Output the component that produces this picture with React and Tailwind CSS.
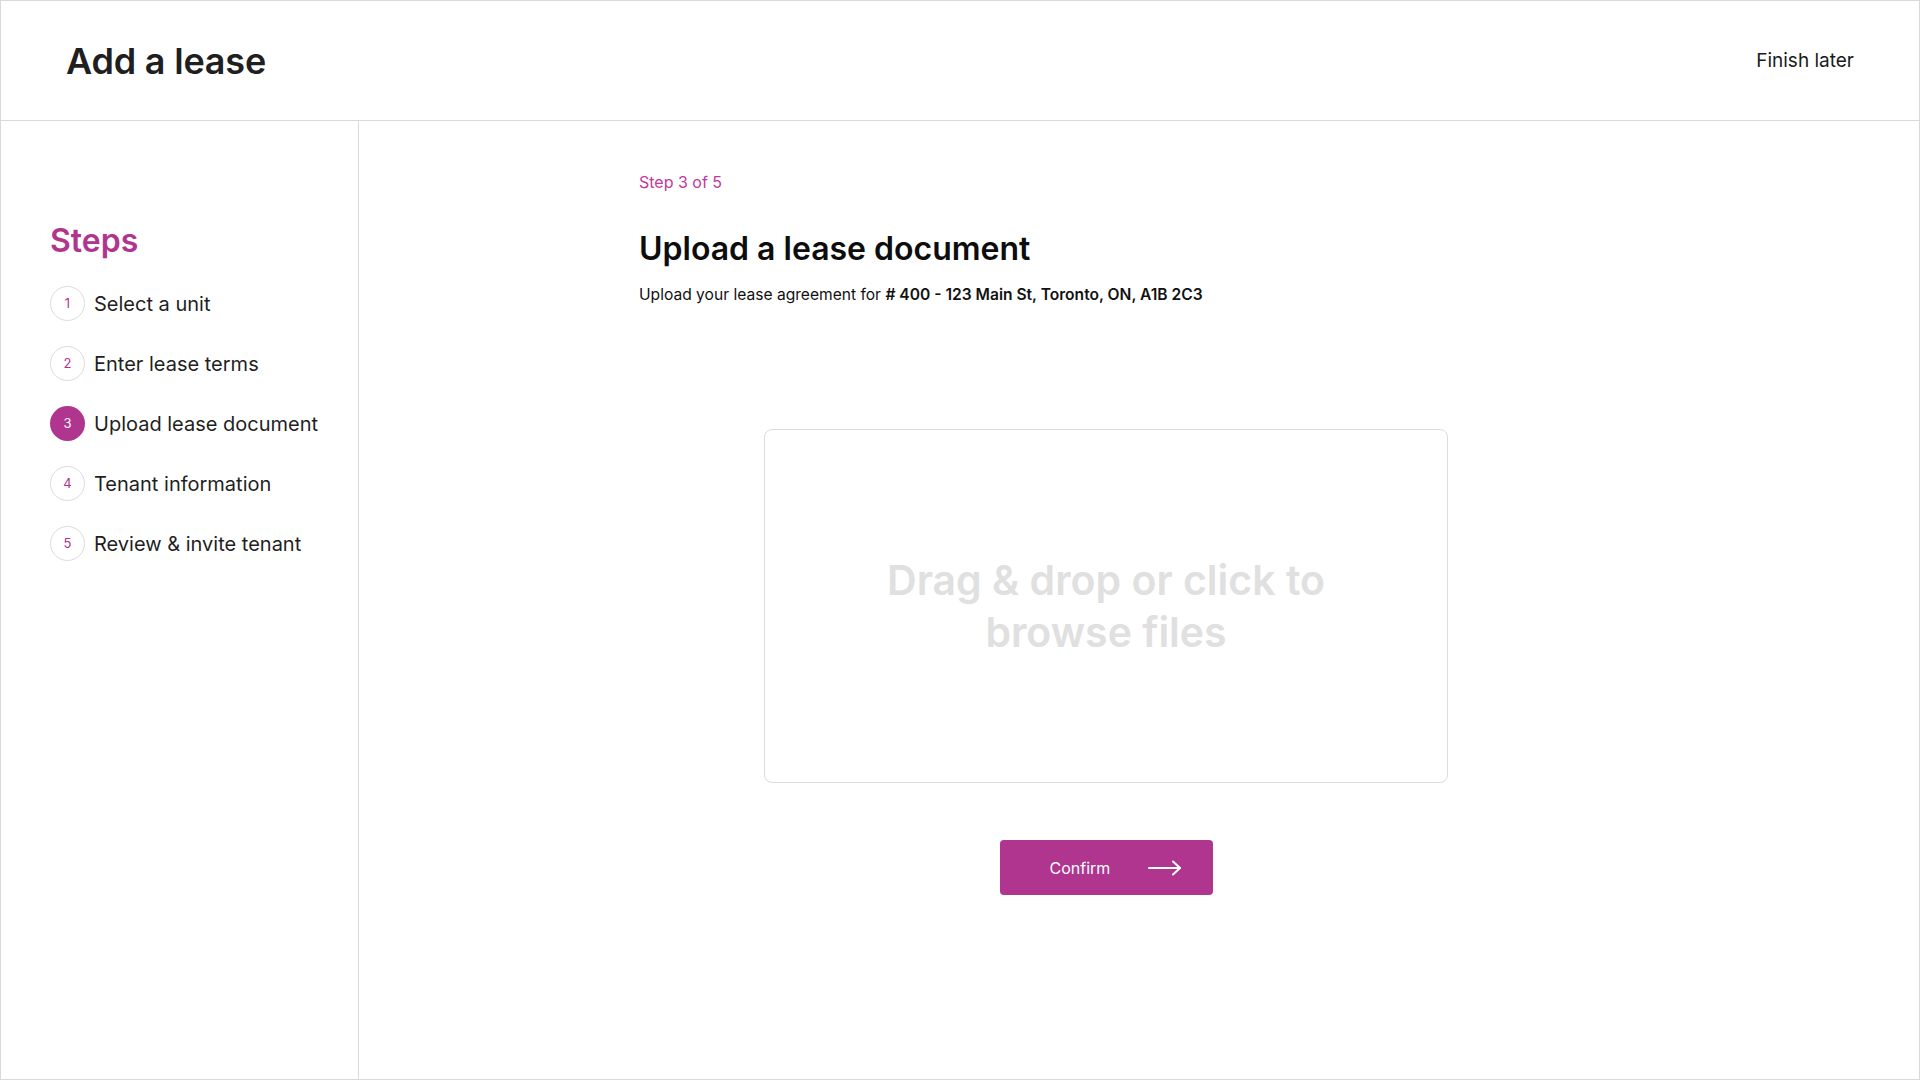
import React from 'react';

const steps = [
  { n: 1, label: 'Select a unit' },
  { n: 2, label: 'Enter lease terms' },
  { n: 3, label: 'Upload lease document' },
  { n: 4, label: 'Tenant information' },
  { n: 5, label: 'Review & invite tenant' },
];

export default function App() {
  const current = 3;

  return (
    <div
      className="flex h-[1080px] w-[1920px] flex-col border border-[#d9d9d9] bg-white text-[#1c1c1c]"
      style={{ fontFamily: 'Inter, "Noto Sans", sans-serif' }}
    >
      {/* Header */}
      <header className="flex h-[120px] shrink-0 items-center justify-between border-b border-[#d9d9d9] pl-[65px] pr-[65px]">
        <h1 className="text-[36px] font-semibold leading-none tracking-[-0.2px] text-[#1f1f1f]">Add a lease</h1>
        <button className="text-[19px] leading-none text-[#1a1a1a]">Finish later</button>
      </header>

      <div className="flex flex-1">
        {/* Sidebar */}
        <aside className="w-[358px] shrink-0 border-r border-[#d9d9d9] pl-[49px] pt-[100px]">
          <h2 className="text-[32px] font-semibold leading-[40px] text-[#b0358f]">Steps</h2>
          <ul className="mt-[25px] flex flex-col gap-[25px]">
            {steps.map((s) => (
              <li key={s.n} className="flex items-center gap-[9px]">
                <span
                  className={
                    s.n === current
                      ? 'flex h-[35px] w-[35px] items-center justify-center rounded-full bg-[#b0358f] text-[13px] text-white'
                      : 'flex h-[35px] w-[35px] items-center justify-center rounded-full border border-[#dcdcdc] text-[13px] text-[#b0358f]'
                  }
                >
                  {s.n}
                </span>
                <span className="text-[20px] leading-none text-[#1f1f1f]">{s.label}</span>
              </li>
            ))}
          </ul>
        </aside>

        {/* Main */}
        <main className="flex-1 pl-[280px] pt-[51px]">
          <div className="flex w-[934px] flex-col">
            <p className="text-[16px] leading-[20px] text-[#c0399b]">Step 3 of 5</p>
            <h3 className="mt-[38px] text-[32px] font-semibold leading-[38px] text-[#0d0d0d]">Upload a lease document</h3>
            <p className="mt-[17px] text-[15.6px] leading-[20px] text-[#111]">
              Upload your lease agreement for{' '}
              <span className="font-semibold">#&nbsp;400 - 123 Main St, Toronto, ON, A1B 2C3</span>
            </p>

            <div className="mt-[124px] flex h-[354px] w-[684px] cursor-pointer items-center justify-center self-center rounded-[8px] border border-[#dcdcdc]">
              <p className="w-[450px] text-center text-[41px] font-semibold leading-[52px] text-[#e0e0e0]">
                Drag &amp; drop or click to browse files
              </p>
            </div>

            <button className="mt-[57px] flex h-[55px] w-[213px] items-center self-center rounded-[4px] bg-[#b0358f] pl-[50px] pr-[31px] text-white">
              <span className="text-[16px] leading-none">Confirm</span>
              <svg className="ml-auto" width="34" height="16" viewBox="0 0 34 16" fill="none" stroke="currentColor" strokeWidth="2" strokeLinecap="round" strokeLinejoin="round">
                <path d="M1 8h31" />
                <path d="M25 1.5 32 8l-7 6.5" />
              </svg>
            </button>
          </div>
        </main>
      </div>
    </div>
  );
}
